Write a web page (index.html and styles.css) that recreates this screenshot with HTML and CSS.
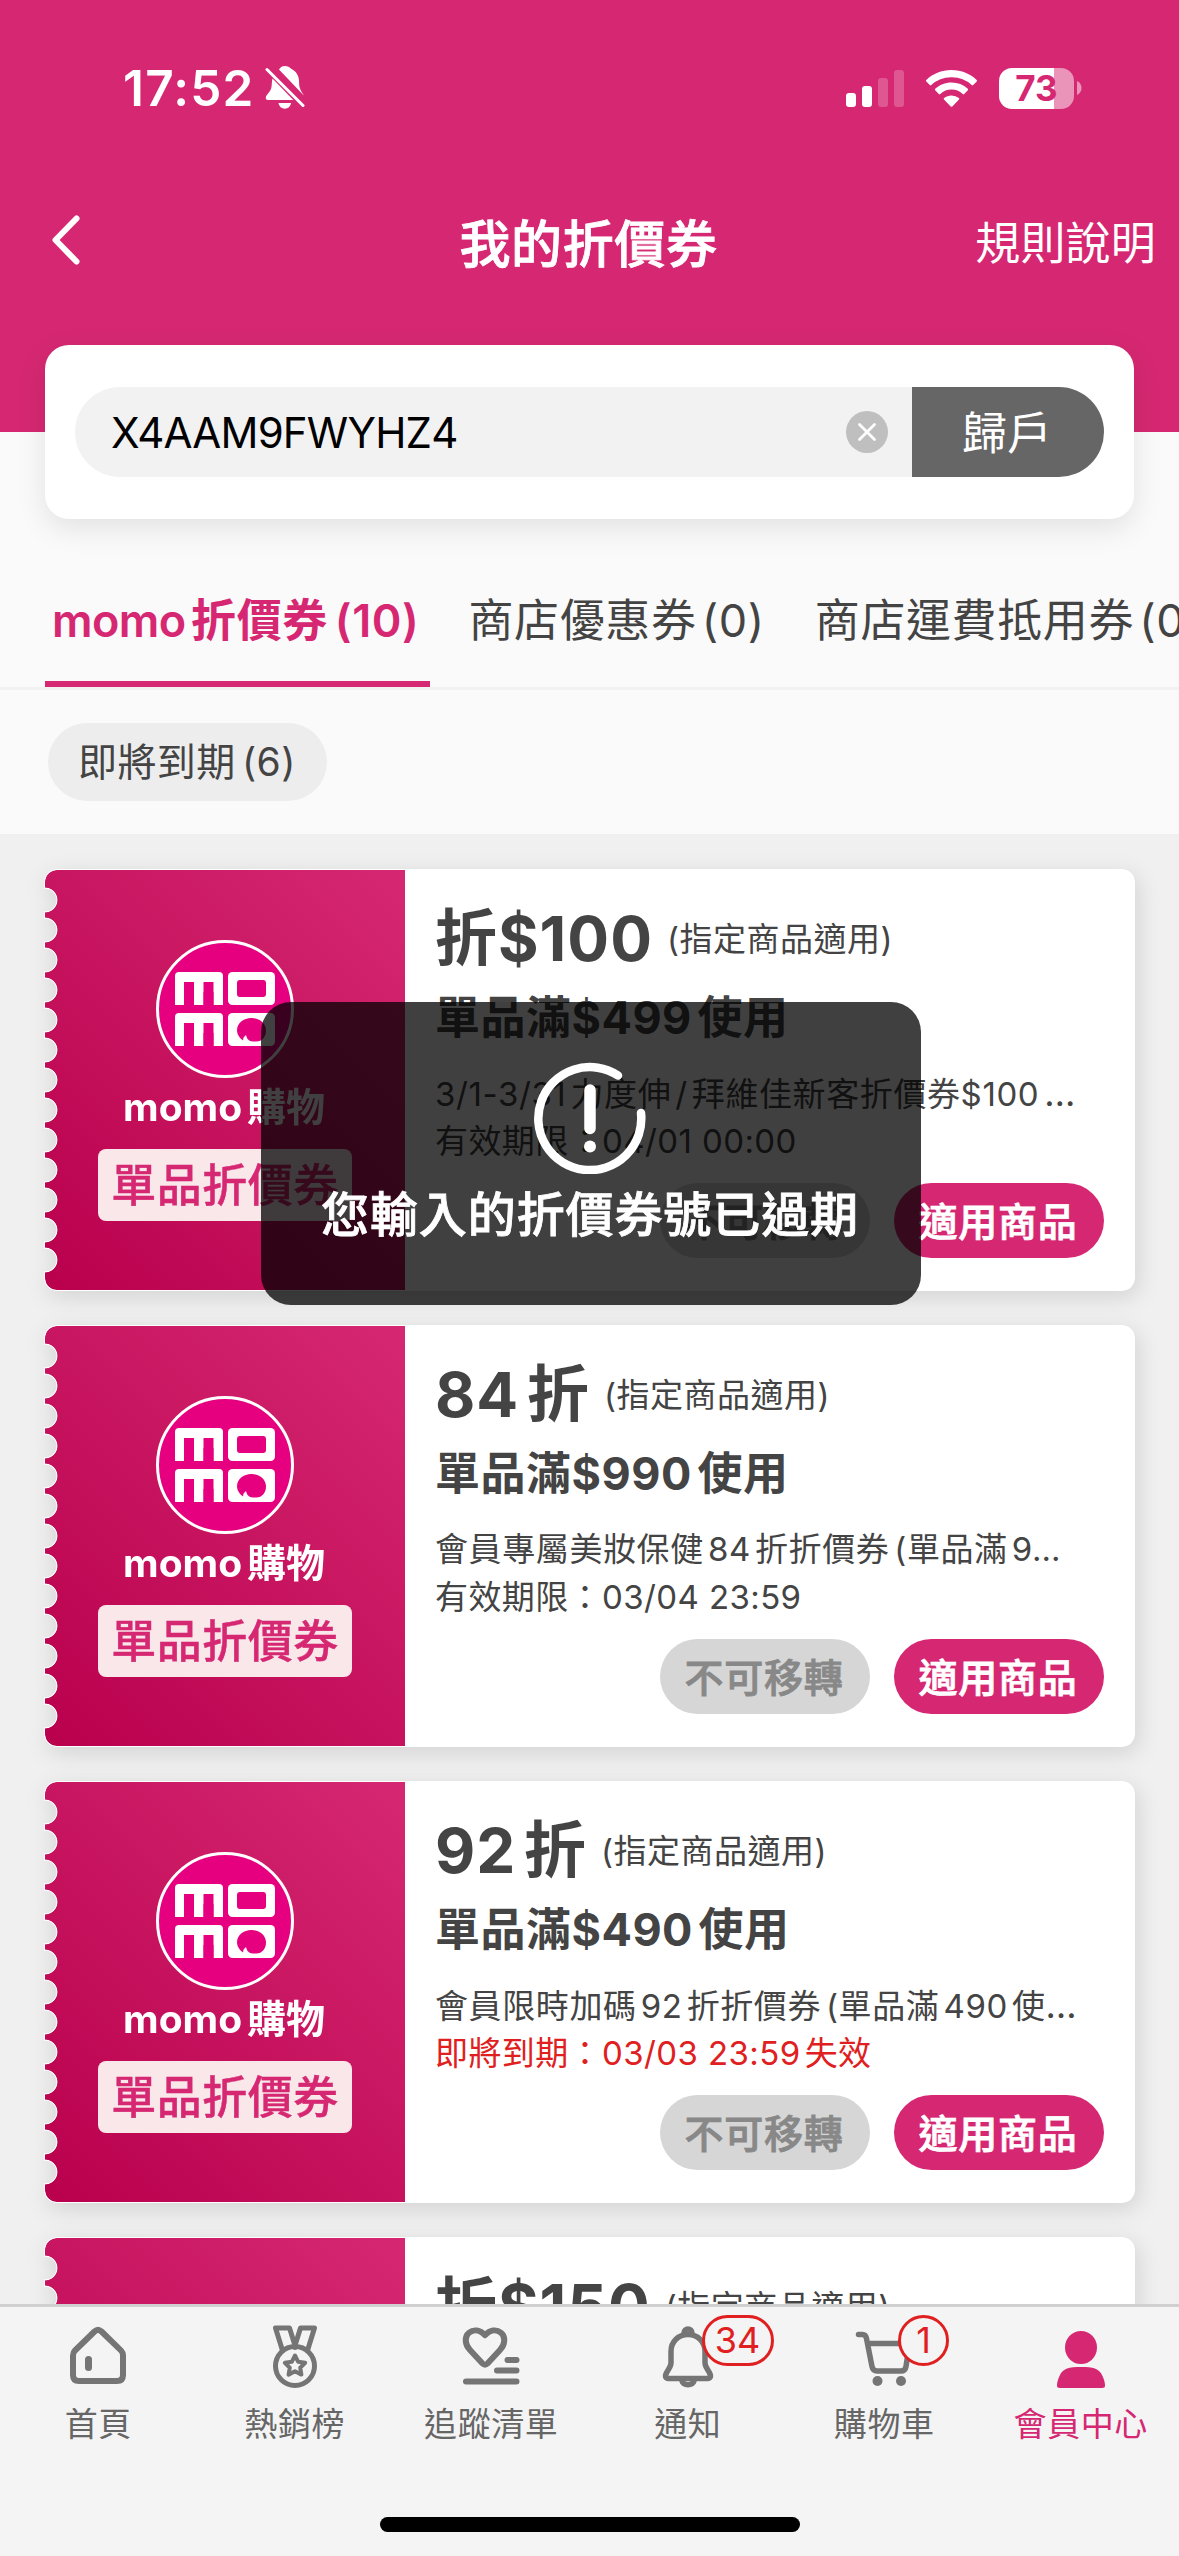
FILE: index.html
```html
<!DOCTYPE html>
<html lang="zh-Hant">
<head>
<meta charset="utf-8">
<title>我的折價券</title>
<link rel="stylesheet" href="styles.css">
</head>
<body>
<svg class="sprite" aria-hidden="true">
  <symbol id="momo-logo" viewBox="0 0 138 138">
    <circle cx="69" cy="69" r="67.5" fill="#e6007f" stroke="#fff" stroke-width="3"/>
    <g fill="#fff">
      <rect x="19" y="32" width="48" height="20" rx="4"/><rect x="19" y="40" width="9" height="25"/><rect x="38" y="40" width="9.500" height="25"/><rect x="57.500" y="40" width="9.500" height="25"/>
      <rect x="72" y="32" width="47" height="33" rx="4.500"/>
      <rect x="19" y="73" width="48" height="20" rx="4"/><rect x="19" y="81" width="9" height="25"/><rect x="38" y="81" width="9.500" height="25"/><rect x="57.500" y="81" width="9.500" height="25"/>
      <rect x="72" y="73" width="47" height="33" rx="4.500"/>
    </g>
    <g fill="#e6007f">
      <rect x="28" y="42" width="10" height="24"/><rect x="47.500" y="42" width="10" height="24"/>
      <rect x="81" y="40" width="29" height="17" rx="3"/>
      <rect x="28" y="83" width="10" height="24"/><rect x="47.500" y="83" width="10" height="24"/>
      <path d="M95.500 78c8 0 14.500 5 14.500 12.500 0 6-3.500 11-10 11-4.500 0-7.500-.5-9-3.500l-1-3-2.500 2.500-.5 3c-3.500-2.500-6-6-6-10C81 83 87.500 78 95.500 78z"/>
    </g>
  </symbol>
</svg>
<main class="app">
  <header class="header">
    <div class="status">
      <span class="time">17:52</span>
      <svg class="mute" viewBox="0 0 40 44">
        <path fill="#fff" d="M20 0c-3 0-5 1.500-6 3.600l24.800 25.900c-.6-1.500-3.300-4.500-4.300-8.500-.8-4 .3-8.500-2.500-13C30 4.500 27 3.500 25.800 2.600 24.500 1 22.500 0 20 0zM7.500 12.500c-.8 3-.5 6.500-1.200 9.500C5 26.500 1.500 28 .8 31.500c-.3 1.800.9 2.500 2.500 2.500h25zM13.500 37h12.600c-.7 3.500-3 5.700-6.300 5.700s-5.600-2.200-6.300-5.700z"/>
        <path stroke="#fff" stroke-width="3" stroke-linecap="round" d="M2 3.500 38 39.500"/>
      </svg>
      <svg class="signal" viewBox="0 0 58 37" fill="#fff">
        <rect y="23" width="10" height="14" rx="3"/><rect x="16" y="16" width="10" height="21" rx="3"/>
        <rect x="32" y="8" width="10" height="29" rx="3" opacity=".22"/><rect x="48" width="10" height="37" rx="3" opacity=".22"/>
      </svg>
      <svg class="wifi" viewBox="0 0 51 37" fill="#fff">
        <path d="M25.500 0C15.500 0 6.500 3.900.3 10c-.4.400-.4 1 0 1.400l3.500 3.700c.4.500 1.100.5 1.500 0A29 29 0 0 1 25.500 7.300a29 29 0 0 1 20.200 7.800c.4.500 1.100.5 1.500 0l3.500-3.700c.4-.4.4-1 0-1.400C44.500 3.900 35.500 0 25.500 0z"/>
        <path d="M25.500 12.500c-6.300 0-12 2.400-16.300 6.300-.4.400-.4 1 0 1.400l3.600 3.800c.4.500 1.100.5 1.500 0a16.500 16.500 0 0 1 22.400 0c.4.500 1.100.5 1.500 0l3.600-3.800c.4-.4.4-1 0-1.400a24 24 0 0 0-16.300-6.300z"/>
        <path d="M25.500 25.500c-2.800 0-5.400.9-7.400 2.500-.5.400-.5 1-.1 1.400l6.700 7c.4.500 1.100.5 1.600 0l6.700-7c.4-.4.400-1-.1-1.400a12 12 0 0 0-7.400-2.500z"/>
      </svg>
      <div class="battery"><span>73</span></div>
      <svg class="nub" viewBox="0 0 5 14"><path fill="#fff" opacity=".5" d="M0 0c3 1.500 4.500 4 4.500 7S3 12.500 0 14z"/></svg>
    </div>
    <div class="titlebar">
      <svg class="back" viewBox="0 0 28 50"><path fill="none" stroke="#fff" stroke-width="6" stroke-linecap="round" stroke-linejoin="round" d="M24.500 3.500 3.500 25l21 21.500"/></svg>
      <h1>我的折價券</h1>
      <span class="rules">規則說明</span>
    </div>
  </header>

  <section class="search">
    <div class="field">
      <span class="code">X4AAM9FWYHZ4</span>
      <svg class="clear" viewBox="0 0 42 42"><circle cx="21" cy="21" r="21" fill="#bfbfbf"/><path stroke="#fff" stroke-width="2.800" stroke-linecap="round" d="m13.500 13.500 15 15m0-15-15 15"/></svg>
    </div>
    <button class="claim">歸戶</button>
  </section>

  <nav class="tabs">
    <span class="tab active"><span class="latin">momo</span>折價券 (10)</span>
    <span class="tab">商店優惠券 (0)</span>
    <span class="tab">商店運費抵用券 (0)</span>
  </nav>

  <div class="filters"><span class="chip">即將到期 (6)</span></div>

  <section class="list">
    <article class="shadow"><div class="coupon">
      <div class="brand"><svg class="logo"><use href="#momo-logo"/></svg><span class="shop">momo購物</span><span class="kind">單品折價券</span></div>
      <div class="info">
        <div class="head"><strong>折$100</strong><span>(指定商品適用)</span></div>
        <div class="cond">單品滿$499使用</div>
        <div class="line">3/1-3/31力度伸<span class="slash">/</span>拜維佳新客折價券$100 <span class="dots">…</span></div>
        <div class="line date">有效期限：04/01 00:00</div>
        <div class="actions"><button class="btn off">不可移轉</button><button class="btn">適用商品</button></div>
      </div>
    </div></article>
    <article class="shadow"><div class="coupon">
      <div class="brand"><svg class="logo"><use href="#momo-logo"/></svg><span class="shop">momo購物</span><span class="kind">單品折價券</span></div>
      <div class="info">
        <div class="head"><strong>84折</strong><span>(指定商品適用)</span></div>
        <div class="cond">單品滿$990使用</div>
        <div class="line">會員專屬美妝保健84折折價券 (單品滿9…</div>
        <div class="line date">有效期限：03/04 23:59</div>
        <div class="actions"><button class="btn off">不可移轉</button><button class="btn">適用商品</button></div>
      </div>
    </div></article>
    <article class="shadow"><div class="coupon">
      <div class="brand"><svg class="logo"><use href="#momo-logo"/></svg><span class="shop">momo購物</span><span class="kind">單品折價券</span></div>
      <div class="info">
        <div class="head"><strong>92折</strong><span>(指定商品適用)</span></div>
        <div class="cond">單品滿$490使用</div>
        <div class="line">會員限時加碼92折折價券 (單品滿490使<span class="dots">…</span></div>
        <div class="line date soon">即將到期：03/03 23:59失效</div>
        <div class="actions"><button class="btn off">不可移轉</button><button class="btn">適用商品</button></div>
      </div>
    </div></article>
    <article class="shadow"><div class="coupon">
      <div class="brand"></div>
      <div class="info">
        <div class="head"><strong>折$150</strong><span>(指定商品適用)</span></div>
      </div>
    </div></article>
  </section>

  <footer class="tabbar">
    <div class="items">
      <div class="item">
        <svg viewBox="0 0 66 66" fill="none" stroke="#757575" stroke-width="6" stroke-linejoin="round" stroke-linecap="round"><path d="M29.500 8.500 10 27.500c-1.500 1.500-2 3-2 5V52c0 4 2 6 6 6h38c4 0 6-2 6-6V32.500c0-2-.5-3.500-2-5L36.500 8.500c-2.200-2-4.800-2-7 0z"/><path stroke-width="7" d="M23.500 36.500v8"/></svg>
        <span>首頁</span>
      </div>
      <div class="item">
        <svg viewBox="0 0 66 66" fill="none" stroke="#757575" stroke-width="5" stroke-linejoin="round" stroke-linecap="round"><circle cx="33" cy="43" r="19.500"/><path d="M20.500 27.500 13.500 5h14L33 22.500 38.500 5h14l-7 22.500M33 22.500v2"/><path stroke-width="4" d="m33 32.500 3.200 6.300 7 1-5 4.900 1.200 6.900-6.400-3.300-6.400 3.300 1.200-6.900-5-4.900 7-1z"/></svg>
        <span>熱銷榜</span>
      </div>
      <div class="item">
        <svg viewBox="0 0 66 66" fill="none" stroke="#757575" stroke-width="6" stroke-linejoin="round" stroke-linecap="round"><path d="M24.500 40.500 12 27C6.500 21 6.500 13.500 11 9.800c4.800-4 11-2.800 16 2.400 5-5.200 11.200-6.400 16-2.400 4.500 3.700 4.500 11.200-1 17.200L29.500 40.500c-1.500 1.500-3.500 1.500-5 0z"/><path d="M49.500 37h9M39 47.500h19.500M8 58.500h50.500"/></svg>
        <span>追蹤清單</span>
      </div>
      <div class="item">
        <svg viewBox="0 0 66 66" fill="none" stroke="#757575" stroke-width="5.500" stroke-linejoin="round" stroke-linecap="round"><path d="M33 11.500c-9.500 0-17 7-17 17V40c0 5-5.500 9-5.500 13 0 1.500 1 2.500 2.500 2.500h40c1.500 0 2.500-1 2.500-2.500 0-4-5.500-8-5.500-13V28.500c0-10-7.500-17-17-17z"/><path d="M29 10c0-5.500 8-5.500 8 0M27 58c1.500 5 10.500 5 12 0"/></svg>
        <b class="badge wide">34</b>
        <span>通知</span>
      </div>
      <div class="item">
        <svg viewBox="0 0 66 66" fill="none" stroke="#757575" stroke-width="5.500" stroke-linejoin="round" stroke-linecap="round"><path d="M7.500 11.500h4c2.500 0 3.500 1.500 4 4l5.500 28c.6 3 2 4.500 5 4.500h24c3 0 4.500-1.500 5-4.500L58.500 20.500H17"/><g fill="#757575" stroke="none"><circle cx="26.500" cy="58" r="5"/><circle cx="50" cy="58" r="5"/></g></svg>
        <b class="badge">1</b>
        <span>購物車</span>
      </div>
      <div class="item on">
        <svg viewBox="0 0 66 66" fill="#d62872"><ellipse cx="33" cy="24.500" rx="16" ry="16.500"/><path d="M33 44c12 0 18 1 21.500 9 1.800 4 2.500 7 2.500 9.500 0 1.800-1 2.500-3 2.500H12c-2 0-3-.7-3-2.500 0-2.500.7-5.500 2.500-9.500C15 45 21 44 33 44z"/></svg>
        <span>會員中心</span>
      </div>
    </div>
    <div class="home-indicator"></div>
  </footer>

  <div class="toast">
    <svg viewBox="0 0 112 112" fill="none" stroke="#fff" stroke-width="8.500" stroke-linecap="round"><path d="M84 13.500A51.500 51.500 0 1 0 107 51"/><path stroke-width="11.500" d="M56 28v38.500"/><circle cx="56" cy="84.500" r="6" fill="#fff" stroke="none"/></svg>
    <p>您輸入的折價券號已過期</p>
  </div>
</main>
</body>
</html>
```
FILE: styles.css
```css
* { box-sizing: border-box; }
body {
  margin: 0;
  font-family: Inter, "Noto Sans CJK TC", sans-serif;
  color: #444;
  text-autospace: normal;
}
h1, p { margin: 0; font: inherit; }
button { border: 0; padding: 0; font-family: inherit; text-autospace: inherit; }
svg { display: block; flex: none; }
.sprite { position: absolute; width: 0; height: 0; }

.app {
  position: relative;
  display: flex;
  flex-direction: column;
  width: 1179px;
  height: 2556px;
  overflow: hidden;
  background: #fafafa;
  white-space: nowrap;
}

/* header */
.header { flex: none; height: 432px; background: #d62872; color: #fff; }
.status { display: flex; align-items: center; height: 176px; padding-left: 123px; }
.time { width: 142px; font-size: 49.500px; font-weight: 600; line-height: 60px; letter-spacing: 1.200px; }
.mute { width: 40px; height: 44px; }
.signal { width: 58px; height: 37px; margin-left: 541px; }
.wifi { width: 51px; height: 37px; margin-left: 22px; }
.battery {
  width: 75px; height: 41px; margin-left: 22px; border-radius: 13px;
  background: linear-gradient(90deg, #fff 55px, rgba(255, 255, 255, .5) 55px);
  color: #d62872; font-size: 35px; font-weight: 700; line-height: 41px; text-align: center;
}
.nub { width: 5px; height: 14px; margin-left: 3px; }
.titlebar {
  display: grid; grid-template-columns: 1fr auto 1fr; align-items: center;
  height: 134px; padding: 0 23px 0 52px;
}
.back { width: 28px; height: 50px; margin-top: -6px; }
.titlebar h1 { padding: 0 31px 5px 0; font-size: 51px; font-weight: 500; letter-spacing: .6px; -webkit-text-stroke: .8px currentColor; }
.rules { justify-self: end; padding-bottom: 5px; font-size: 45px; font-weight: 400; letter-spacing: .2px; }

/* code entry */
.search {
  flex: none; display: flex; align-items: center;
  height: 174px; margin: -87px 45px 0; padding: 0 30px;
  border-radius: 24px; background: #fff; box-shadow: 0 9px 30px rgba(0, 0, 0, .1);
}
.field {
  flex: 1; display: flex; align-items: center; justify-content: space-between;
  height: 90px; padding: 0 24px 0 36px; border-radius: 45px 0 0 45px; background: #f2f2f2;
}
.code { color: #000; font-size: 42px; letter-spacing: -.8px; }
.clear { width: 42px; height: 42px; }
.claim { width: 192px; height: 90px; padding: 0 2px 4px 0; border-radius: 0 45px 45px 0; background: #666; color: #fff; font-size: 45px; }

/* tabs */
.tabs {
  flex: none; display: flex; gap: 26px; height: 171px; padding: 0 45px;
  border-bottom: 3px solid #f2f2f2; overflow: hidden;
}
.tab { flex: none; padding: 69px 12px 0; font-size: 45px; line-height: 66px; letter-spacing: .6px; word-spacing: -8px; border-bottom: 6px solid transparent; }
.tab.active { margin-right: 1px; color: #d62872; font-weight: 600; letter-spacing: .6px; word-spacing: -5px; border-color: #d62872; padding: 69px 10px 0 7px; }
.latin { letter-spacing: -.6px; }
.filters { flex: none; height: 144px; padding: 33px 48px; }
.chip { display: inline-block; height: 78px; padding: 0 31px 0 30px; border-radius: 39px; background: #ededed; font-size: 39px; line-height: 78px; letter-spacing: .4px; word-spacing: -5px; }

/* coupons */
.list {
  flex: 1; min-height: 0; display: flex; flex-direction: column; gap: 34px;
  padding: 35px 44px 0; background: #f0f0f0; overflow: hidden;
}
.shadow { flex: none; filter: drop-shadow(3px 6px 11px rgba(0, 0, 0, .12)); }
.coupon {
  display: flex; height: 422px; padding: 1px; border-radius: 13px; background: #fff;
  -webkit-mask:
    linear-gradient(#000, #000) 0 0 / 30px 16px no-repeat,
    linear-gradient(#000, #000) 0 100% / 30px 16px no-repeat,
    radial-gradient(circle at 1px 15px, transparent 11px, #000 11.800px) 0 16px / 100% 30px repeat-y;
}
.brand {
  flex: none; display: flex; flex-direction: column; align-items: center;
  width: 360px; height: 420px; padding-top: 70px; border-radius: 12px 0 0 12px;
  background: linear-gradient(45deg, #b9004d, #d62872); color: #fff;
  -webkit-mask:
    linear-gradient(#000, #000) 0 0 / 30px 15px no-repeat,
    linear-gradient(#000, #000) 0 100% / 30px 15px no-repeat,
    radial-gradient(circle at 0 15px, transparent 12px, #000 12.800px) 0 15px / 100% 30px repeat-y;
}
.logo { width: 138px; height: 138px; }
.shop { height: 57px; padding-right: 2px; font-size: 39px; font-weight: 700; line-height: 57px; }
.kind {
  width: 254px; height: 72px; margin-top: 14px; border-radius: 8px;
  background: #fae7e9; color: #d62872; text-align: center;
  font-size: 45px; font-weight: 500; line-height: 73px; letter-spacing: .5px;
  -webkit-text-stroke: .4px currentColor;
}
.info { flex: 1; min-width: 0; padding: 24px 30px 0 30px; }
.head { display: flex; align-items: center; gap: 14px; height: 90px; }
.head strong { font-size: 62px; font-weight: 700; line-height: 90px; letter-spacing: 1px; }
.head span { font-size: 33px; line-height: 50px; letter-spacing: .5px; }
.cond { height: 66px; font-size: 45px; font-weight: 700; line-height: 67px; letter-spacing: .5px; }
.line { height: 48px; font-size: 33px; line-height: 48px; letter-spacing: .6px; word-spacing: -5px; }
.line.date { letter-spacing: .4px; word-spacing: 0; }
.slash { margin: 0 4px; }
.dots { letter-spacing: 3px; font-size: 36px; }
.cond + .line { margin-top: 19px; }
.soon { color: #e02020; }
.actions { display: flex; justify-content: flex-end; gap: 24px; margin-top: 18px; }
.btn {
  width: 210px; height: 75px; padding: 0 2px 3px 0; border-radius: 38px;
  background: #d62872; color: #fff; font-size: 39px; font-weight: 500; letter-spacing: .7px;
  -webkit-text-stroke: .8px currentColor;
}
.btn.off { background: #d6d6d6; color: #888; }

/* bottom bar */
.tabbar { flex: none; height: 252px; border-top: 3px solid #d0d0d0; background: #f4f4f4; }
.items { display: grid; grid-template-columns: repeat(6, 1fr); height: 210px; }
.item { position: relative; display: flex; flex-direction: column; align-items: center; padding-top: 16px; color: #666; font-size: 33px; letter-spacing: .6px; }
.item svg { width: 66px; height: 66px; }
.item > span { margin-top: 10px; line-height: 50px; }
.item.on { color: #d62872; }
.badge {
  position: absolute; left: 112px; top: 8px; width: 51px; height: 51px;
  border: 3px solid #e02020; border-radius: 26px; background: #f4f4f4;
  color: #e02020; font-size: 36px; font-weight: 400; line-height: 45px; text-align: center; letter-spacing: 0;
}
.badge.wide { width: 72px; }
.home-indicator { width: 420px; height: 15px; margin: 0 auto; border-radius: 8px; background: #000; }

/* message over the list */
.toast {
  position: absolute; left: 261px; top: 1002px; width: 660px; height: 303px;
  display: flex; flex-direction: column; align-items: center; padding: 60px 3px 0 0;
  border-radius: 30px; background: rgba(0, 0, 0, .75); color: #fff;
}
.toast svg { width: 112px; height: 112px; }
.toast p { margin-top: 6px; padding-left: 1px; font-size: 48px; font-weight: 500; line-height: 70px; letter-spacing: .9px; -webkit-text-stroke: .8px currentColor; }
```
